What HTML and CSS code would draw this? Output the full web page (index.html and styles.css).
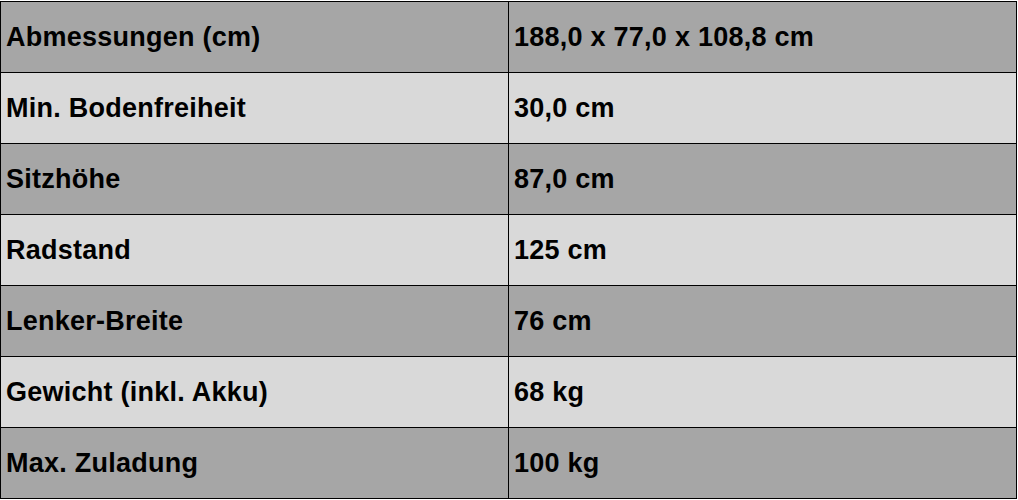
FILE: index.html
```html
<!DOCTYPE html>
<html lang="de">
<head>
<meta charset="utf-8">
<link rel="stylesheet" href="styles.css">
</head>
<body>
<table class="spec">
  <tr class="dark"><td>Abmessungen (cm)</td><td>188,0 x 77,0 x 108,8 cm</td></tr>
  <tr class="light"><td>Min. Bodenfreiheit</td><td>30,0 cm</td></tr>
  <tr class="dark"><td>Sitzhöhe</td><td>87,0 cm</td></tr>
  <tr class="light"><td>Radstand</td><td>125 cm</td></tr>
  <tr class="dark"><td>Lenker-Breite</td><td>76 cm</td></tr>
  <tr class="light"><td>Gewicht (inkl. Akku)</td><td>68 kg</td></tr>
  <tr class="dark"><td>Max. Zuladung</td><td>100 kg</td></tr>
</table>
</body>
</html>
```
FILE: styles.css
```css
html, body {
  margin: 0;
  padding: 0;
  background: #ffffff;
}
body {
  padding-top: 1px;
}
.spec {
  border-collapse: collapse;
  width: 1017px;
  table-layout: fixed;
  font-family: "Liberation Sans", Arial, sans-serif;
  font-weight: bold;
  font-size: 27px;
  letter-spacing: 0.25px;
  color: #000;
}
.spec td {
  border: 1px solid #000;
  height: 71px;
  padding: 0 5px;
  box-sizing: border-box;
  vertical-align: middle;
  white-space: nowrap;
}
.spec td:first-child {
  width: 508px;
}
.dark td {
  background: #a6a6a6;
}
.light td {
  background: #d9d9d9;
}
```
